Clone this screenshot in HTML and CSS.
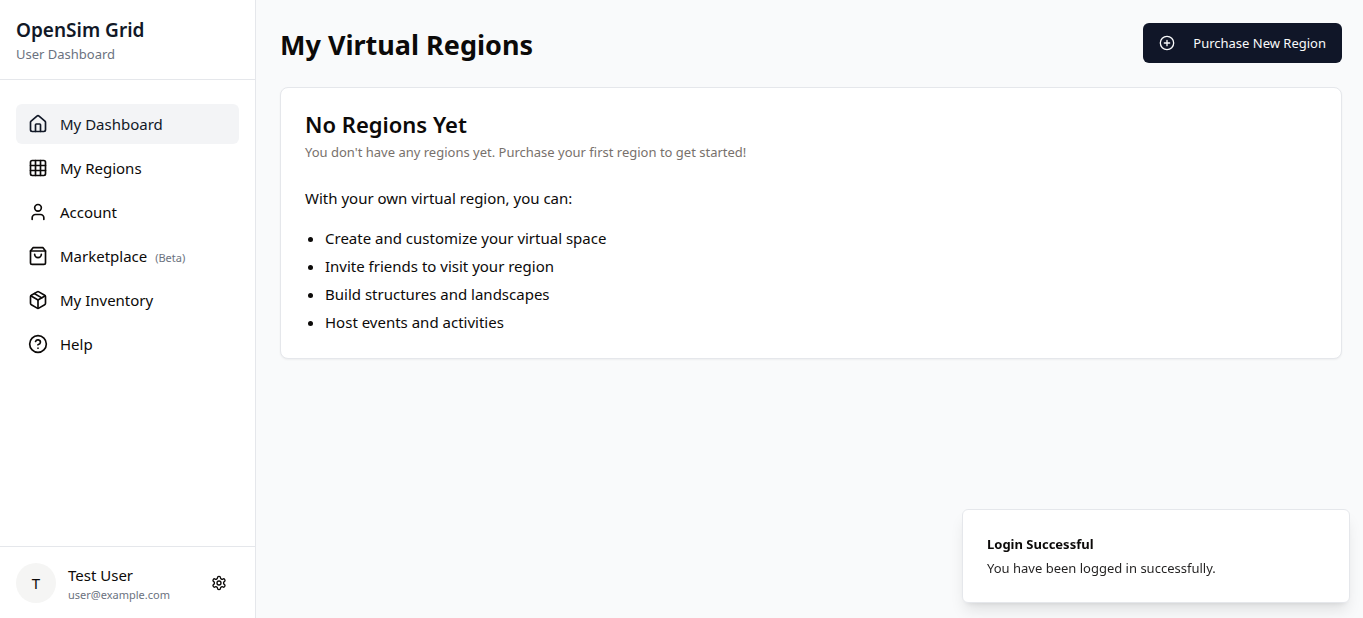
FILE: index.html
```html
<!DOCTYPE html>
<html lang="en">
<head>
<meta charset="utf-8">
<meta name="viewport" content="width=device-width, initial-scale=1">
<title>OpenSim Grid</title>
<link rel="stylesheet" href="styles.css">
</head>
<body>
<div class="app">
  <aside class="sidebar">
    <header class="brand">
      <h2 class="brand-name">OpenSim Grid</h2>
      <p class="brand-sub">User Dashboard</p>
    </header>
    <nav class="nav" aria-label="Main">
      <a class="nav-link active" href="#dashboard">
        <svg class="icon" viewBox="0 0 24 24" aria-hidden="true"><path d="M15 21v-8a1 1 0 0 0-1-1h-4a1 1 0 0 0-1 1v8"/><path d="M3 10a2 2 0 0 1 .709-1.528l7-5.999a2 2 0 0 1 2.582 0l7 5.999A2 2 0 0 1 21 10v9a2 2 0 0 1-2 2H5a2 2 0 0 1-2-2z"/></svg>
        <span>My Dashboard</span>
      </a>
      <a class="nav-link" href="#regions">
        <svg class="icon" viewBox="0 0 24 24" aria-hidden="true"><rect width="18" height="18" x="3" y="3" rx="2"/><path d="M3 9h18M3 15h18M9 3v18M15 3v18"/></svg>
        <span>My Regions</span>
      </a>
      <a class="nav-link" href="#account">
        <svg class="icon" viewBox="0 0 24 24" aria-hidden="true"><path d="M19 21v-2a4 4 0 0 0-4-4H9a4 4 0 0 0-4 4v2"/><circle cx="12" cy="7" r="4"/></svg>
        <span>Account</span>
      </a>
      <a class="nav-link" href="#marketplace">
        <svg class="icon" viewBox="0 0 24 24" aria-hidden="true"><path d="M6 2 3 6v14a2 2 0 0 0 2 2h14a2 2 0 0 0 2-2V6l-3-4Z"/><path d="M3 6h18"/><path d="M16 10a4 4 0 0 1-8 0"/></svg>
        <span>Marketplace <small class="tag">(Beta)</small></span>
      </a>
      <a class="nav-link" href="#inventory">
        <svg class="icon" viewBox="0 0 24 24" aria-hidden="true"><path d="m7.5 4.27 9 5.15"/><path d="M21 8a2 2 0 0 0-1-1.73l-7-4a2 2 0 0 0-2 0l-7 4A2 2 0 0 0 3 8v8a2 2 0 0 0 1 1.73l7 4a2 2 0 0 0 2 0l7-4A2 2 0 0 0 21 16Z"/><path d="m3.3 7 8.7 5 8.7-5"/><path d="M12 22V12"/></svg>
        <span>My Inventory</span>
      </a>
      <a class="nav-link" href="#help">
        <svg class="icon" viewBox="0 0 24 24" aria-hidden="true"><circle cx="12" cy="12" r="10"/><path d="M9.09 9a3 3 0 0 1 5.83 1c0 2-3 3-3 3"/><path d="M12 17h.01"/></svg>
        <span>Help</span>
      </a>
    </nav>
    <footer class="account">
      <span class="avatar" aria-hidden="true">T</span>
      <div class="account-text">
        <p class="account-name">Test User</p>
        <p class="account-mail">user@example.com</p>
      </div>
      <button class="icon-button" type="button" aria-label="Settings">
        <svg class="icon icon-small" viewBox="0 0 24 24" aria-hidden="true"><path d="M12.22 2h-.44a2 2 0 0 0-2 2v.18a2 2 0 0 1-1 1.73l-.43.25a2 2 0 0 1-2 0l-.15-.08a2 2 0 0 0-2.73.73l-.22.38a2 2 0 0 0 .73 2.73l.15.1a2 2 0 0 1 1 1.72v.51a2 2 0 0 1-1 1.74l-.15.09a2 2 0 0 0-.73 2.73l.22.38a2 2 0 0 0 2.73.73l.15-.08a2 2 0 0 1 2 0l.43.25a2 2 0 0 1 1 1.73V20a2 2 0 0 0 2 2h.44a2 2 0 0 0 2-2v-.18a2 2 0 0 1 1-1.73l.43-.25a2 2 0 0 1 2 0l.15.08a2 2 0 0 0 2.73-.73l.22-.39a2 2 0 0 0-.73-2.73l-.15-.08a2 2 0 0 1-1-1.74v-.5a2 2 0 0 1 1-1.74l.15-.09a2 2 0 0 0 .73-2.73l-.22-.38a2 2 0 0 0-2.73-.73l-.15.08a2 2 0 0 1-2 0l-.43-.25a2 2 0 0 1-1-1.73V4a2 2 0 0 0-2-2z"/><circle cx="12" cy="12" r="3"/></svg>
      </button>
    </footer>
  </aside>
  <main class="main">
    <div class="page-head">
      <h1 class="page-title">My Virtual Regions</h1>
      <button class="primary" type="button">
        <svg class="icon icon-small" viewBox="0 0 24 24" aria-hidden="true"><circle cx="12" cy="12" r="10"/><path d="M8 12h8M12 8v8"/></svg>
        Purchase New Region
      </button>
    </div>
    <section class="card">
      <h3 class="card-title">No Regions Yet</h3>
      <p class="card-sub">You don't have any regions yet. Purchase your first region to get started!</p>
      <p class="card-lead">With your own virtual region, you can:</p>
      <ul class="benefits">
        <li>Create and customize your virtual space</li>
        <li>Invite friends to visit your region</li>
        <li>Build structures and landscapes</li>
        <li>Host events and activities</li>
      </ul>
    </section>
  </main>
</div>
<div class="toast" role="status">
  <p class="toast-title">Login Successful</p>
  <p class="toast-text">You have been logged in successfully.</p>
</div>
</body>
</html>
```
FILE: styles.css
```css
* {
  box-sizing: border-box;
}

body,
h1,
h2,
h3,
p,
ul {
  margin: 0;
}

body {
  background: #f9fafb;
  color: #0c0a09;
  font-family: "Noto Sans", sans-serif;
  font-size: 15px;
  line-height: 24px;
}

button {
  border: 0;
  color: inherit;
  font: inherit;
  cursor: pointer;
}

.icon {
  flex: none;
  width: 20px;
  height: 20px;
  fill: none;
  stroke: currentColor;
  stroke-width: 2;
  stroke-linecap: round;
  stroke-linejoin: round;
}

.icon-small {
  width: 16px;
  height: 16px;
}

.app {
  display: flex;
  min-height: 100vh;
}

.sidebar {
  display: flex;
  flex: none;
  flex-direction: column;
  width: 256px;
  background: #fff;
  border-right: 1px solid #e5e7eb;
}

.brand {
  padding: 16px 16px 15px;
  border-bottom: 1px solid #e5e7eb;
}

.brand-name {
  color: #111827;
  font-size: 19px;
  font-weight: 600;
  line-height: 28px;
}

.brand-sub {
  color: #6b7280;
  font-size: 13px;
  line-height: 20px;
}

.nav {
  display: flex;
  flex: 1;
  flex-direction: column;
  gap: 4px;
  padding: 24px 16px;
}

.nav-link {
  display: flex;
  align-items: center;
  gap: 12px;
  padding: 8px 12px;
  border-radius: 6px;
  color: inherit;
  text-decoration: none;
}

.nav-link.active {
  background: #f3f4f6;
  color: #111827;
}

.tag {
  margin-left: 4px;
  color: #6b7280;
  font-size: 11px;
  line-height: 16px;
}

.account {
  display: flex;
  align-items: center;
  gap: 12px;
  padding: 16px 16px 15px;
  border-top: 1px solid #e5e7eb;
}

.avatar {
  display: grid;
  flex: none;
  place-items: center;
  width: 40px;
  height: 40px;
  border-radius: 50%;
  background: #f5f5f4;
}

.account-text {
  flex: 1;
  min-width: 0;
}

.account-mail {
  color: #6b7280;
  font-size: 11px;
  line-height: 16px;
}

.icon-button {
  display: grid;
  place-items: center;
  width: 40px;
  height: 40px;
  padding: 0;
  border-radius: 6px;
  background: none;
}

.main {
  flex: 1;
  min-width: 0;
  padding: 23px 21px 24px 24px;
}

.page-head {
  display: flex;
  align-items: center;
  justify-content: space-between;
  margin-bottom: 24px;
}

.page-title {
  padding-top: 4px;
  font-size: 27px;
  font-weight: 700;
  line-height: 36px;
}

.primary {
  display: flex;
  align-items: center;
  gap: 18px;
  padding: 10px 16px;
  border-radius: 6px;
  background: #101628;
  color: #f9fafb;
  font-size: 13px;
  line-height: 20px;
}

.card {
  padding: 24px;
  border: 1px solid #e5e7eb;
  border-radius: 8px;
  background: #fff;
  box-shadow: 0 1px 2px rgb(0 0 0 / 5%);
}

.card-title {
  font-size: 22px;
  font-weight: 600;
  line-height: 24px;
}

.card-sub {
  margin-top: 6px;
  color: #78716c;
  font-size: 13px;
  line-height: 20px;
}

.card-lead {
  margin-top: 24px;
}

.benefits {
  display: grid;
  gap: 4px;
  margin-top: 16px;
  padding-left: 20px;
}

.toast {
  position: fixed;
  right: 13px;
  bottom: 15px;
  width: 388px;
  max-width: calc(100vw - 26px);
  padding: 24px;
  border: 1px solid #e5e7eb;
  border-radius: 6px;
  background: #fff;
  box-shadow: 0 10px 15px -3px rgb(0 0 0 / 10%), 0 4px 6px -4px rgb(0 0 0 / 10%);
  font-size: 13px;
  line-height: 20px;
}

.toast-title {
  font-weight: 700;
}

.toast-text {
  margin-top: 4px;
  opacity: 0.9;
}
```
